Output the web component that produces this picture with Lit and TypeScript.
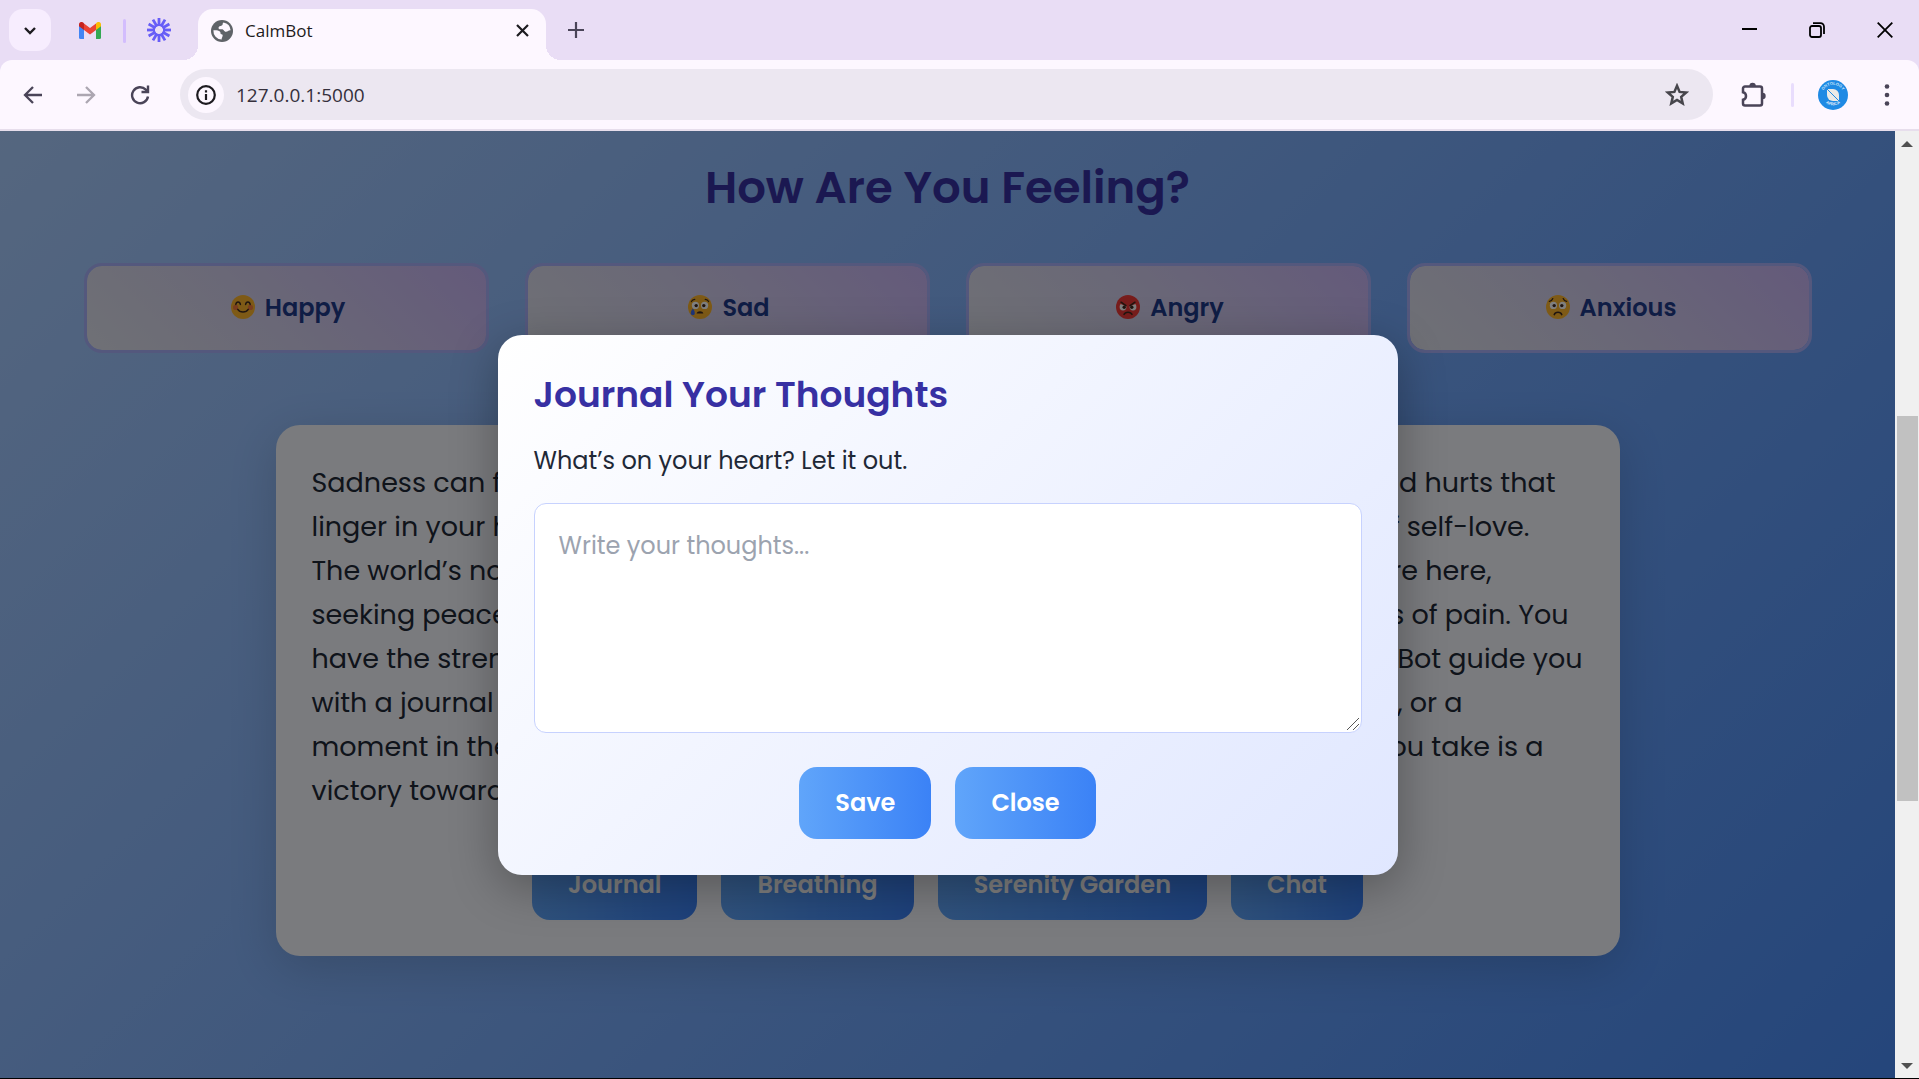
import { LitElement, html, svg, css } from "lit";
import { customElement } from "lit/decorators.js";

type Mood = { name: string; face: unknown };

const yellow = svg`<circle cx="12" cy="12" r="12" fill="#fcb52c"/>`;
const eyes = svg`
  <circle cx="7.4" cy="10.4" r="3.6" fill="#fff"/><circle cx="16.6" cy="10.4" r="3.6" fill="#fff"/>
  <circle cx="8.2" cy="10.6" r="1.7" fill="#402a20"/><circle cx="15.8" cy="10.6" r="1.7" fill="#402a20"/>`;

const moods: Mood[] = [
  {
    name: "Happy",
    face: svg`${yellow}
      <circle cx="4.6" cy="12.4" r="2.6" fill="#f47b3c"/><circle cx="19.4" cy="12.4" r="2.6" fill="#f47b3c"/>
      <path d="M4.8 9.4c.6-3.2 4-3.2 4.6 0M14.6 9.4c.6-3.2 4-3.2 4.6 0M6.8 14.4c2 3.4 8.4 3.4 10.4 0" fill="none" stroke="#402a20" stroke-width="1.5" stroke-linecap="round"/>`,
  },
  {
    name: "Sad",
    face: svg`${yellow}${eyes}
      <path d="M3.4 6.6c.6-1.2 1.8-2 3.4-2.2M20.600 6.600c-.6-1.200-1.800-2-3.400-2.200" fill="none" stroke="#402a20" stroke-width="1.2" stroke-linecap="round"/>
      <path d="M8.6 18.4c.8-2.8 6-2.8 6.8 0z" fill="#402a20"/>
      <path d="M4.8 13.6c1.6 1.6 2 3.2 2 4.6a2 2 0 0 1-4 0c0-1.4.6-3 2-4.6z" fill="#3d6cf0"/>`,
  },
  {
    name: "Angry",
    face: svg`<circle cx="12" cy="12" r="12" fill="#f03a38"/>
      <circle cx="7" cy="12" r="3.4" fill="#fff"/><circle cx="17" cy="12" r="3.4" fill="#fff"/>
      <path d="M3 8.2 10.4 11.4 9.6 6zM21 8.2 13.6 11.4 14.4 6z" fill="#f03a38"/>
      <circle cx="8.2" cy="12.2" r="1.7" fill="#402a20"/><circle cx="15.8" cy="12.2" r="1.7" fill="#402a20"/>
      <path d="M5 7.2 10 10.6M19 7.2 14 10.6M8 19.4c1.4-3 6.6-3 8 0" fill="none" stroke="#402a20" stroke-width="1.5" stroke-linecap="round"/>`,
  },
  {
    name: "Anxious",
    face: svg`${yellow}${eyes}
      <path d="M3.4 6.4c1.6-.2 2.8-1.2 3.4-2.8M20.6 6.4c-1.6-.2-2.8-1.2-3.4-2.8" fill="none" stroke="#402a20" stroke-width="1.3" stroke-linecap="round"/>
      <path d="M8.2 19.6c1.2-3 6.4-3 7.6 0" fill="none" stroke="#402a20" stroke-width="1.5" stroke-linecap="round"/>`,
  },
];

/* Each line: opening words, closing words, free space left at the line's end. */
const lines: [string, string, number][] = [
  ["Sadness can f", "d hurts that", 28],
  ["linger in your h", "f self-love.", 54],
  ["The world’s no", "re here,", 92],
  ["seeking peace", "s of pain. You", 15],
  ["have the stren", "Bot guide you", 1],
  ["with a journal", ", or a", 121],
  ["moment in the", "ou take is a", 40],
  ["victory toward", "", 0],
];

const tools = ["Journal", "Breathing", "Serenity Garden", "Chat"];

@customElement("browser-chrome")
export class BrowserChrome extends LitElement {
  static styles = css`
    :host {
      display: block;
      font-family: "Segoe UI", "Open Sans", "Noto Sans", sans-serif;
      color: #1d1b20;
      background: #e9ddf5;
    }
    button {
      display: grid;
      place-items: center;
      border: 0;
      padding: 0;
      background: none;
      width: 42px;
      height: 42px;
      flex: none;
      color: #4a4458;
    }
    svg { display: block; }
    .strip { display: flex; align-items: flex-end; height: 60px; padding-left: 9px; }
    .strip > button, .strip > .rule { margin-bottom: 9px; }
    .menu { background: #f7edfe; border-radius: 14px; color: #1d1b20; }
    .pinned { width: 48px; }
    .pinned.first { margin-left: 15px; }
    .rule { width: 3px; height: 24px; background: #d3bdfd; border-radius: 2px; flex: none; }
    .strip > .rule { margin: 0 9px 17px; }
    .tab {
      display: flex;
      align-items: center;
      box-sizing: border-box;
      width: 348px;
      height: 51px;
      margin: 0 9px 0 15px;
      padding: 0 9px 8px 13px;
      gap: 12px;
      background: #fdf7ff;
      border-radius: 15px 15px 0 0;
      position: relative;
      font-size: 17px;
    }
    .tab::before, .tab::after {
      content: "";
      position: absolute;
      bottom: 0;
      width: 15px;
      height: 15px;
    }
    .tab::before { right: 100%; background: radial-gradient(circle at 0 0, transparent 15px, #fdf7ff 15px); }
    .tab::after { left: 100%; background: radial-gradient(circle at 100% 0, transparent 15px, #fdf7ff 15px); }
    .tab-title { flex: 1; }
    .tab button { width: 30px; color: #1d1b20; }
    .window { display: flex; margin-left: auto; align-self: stretch; }
    .window button { width: 68px; height: 59px; color: #000; }
    .bar {
      display: flex;
      align-items: center;
      height: 69px;
      padding: 0 11px;
      background: #fdf7ff;
      border-radius: 12px 12px 0 0;
      border-bottom: 2px solid #e7deec;
    }
    .nav { display: flex; gap: 12px; margin-right: 19px; }
    .faded { color: #aca6b1; }
    .address {
      display: flex;
      align-items: center;
      flex: 1;
      height: 51px;
      border-radius: 26px;
      background: #ece7f1;
      padding: 0 3px 0 8px;
    }
    .address .site { width: 36px; height: 36px; border-radius: 50%; background: #fdf7ff; color: #1d1b20; margin-right: 12px; }
    .address input {
      flex: 1;
      border: 0;
      outline: 0;
      padding: 0;
      background: none;
      font: inherit;
      font-size: 19px;
      color: #35303c;
      min-width: 0;
    }
    .address .star { width: 42px; margin-right: 12px; }
    .bar > button { margin-left: 18px; }
    .bar > .extensions { margin-left: 20px; }
    .bar > .rule { margin-left: 16px; background: #e9ddfd; }
    .bar > .more { margin-left: 12px; }
    .badge { font: bold 4px "Liberation Sans", sans-serif; }
  `;

  render() {
    return html`
      <div class="strip">
        <button class="menu" aria-label="Search tabs">
          <svg width="14" height="9" viewBox="0 0 14 9"><path d="M2 2l5 5 5-5" fill="none" stroke="currentColor" stroke-width="2.4"/></svg>
        </button>
        <button class="pinned first" aria-label="Gmail">
          <svg width="22" height="17" viewBox="0 0 22 17">
            <path d="M0 3v12.5A1.5 1.5 0 0 0 1.5 17H5V7z" fill="#4285f4"/>
            <path d="M22 3v12.5a1.5 1.5 0 0 1-1.5 1.5H17V7z" fill="#34a853"/>
            <path d="M17 1.5V8l5-3.7V2.5C22 .2 19.4-.8 17.8.6z" fill="#fbbc04"/>
            <path d="M5 8V1.5l6 4.5 6-4.5V8l-6 4.5z" fill="#ea4335"/>
            <path d="M0 2.5v1.8L5 8V1.5L4.2.6C2.6-.8 0 .2 0 2.5z" fill="#c5221f"/>
          </svg>
        </button>
        <span class="rule"></span>
        <button class="pinned" aria-label="Recorder">
          <svg width="24" height="24" viewBox="0 0 24 24">
            <g stroke="#675df7" stroke-width="2.8">
              ${[0, 30, 60, 90, 120, 150, 180, 210, 240, 270, 300, 330].map(
                (a) => svg`<path d="M12 0v8" transform="rotate(${a} 12 12)"/>`
              )}
            </g>
            <circle cx="12" cy="12" r="5.2" fill="none" stroke="#675df7" stroke-width="2.2"/>
          </svg>
        </button>
        <div class="tab">
          <svg width="22" height="22" viewBox="0 0 22 22">
            <circle cx="11" cy="11" r="11" fill="#5f6368"/>
            <path d="M12.5 2.4c-1.5 1-.2 2.3-1.7 3.1-1.6.8-3.3.7-3.3 2.3s1.4 1.5 3.2 1.4c2.3-.1 2.2 2.5 4.2 2.500 2.200 0 2.300-1.700 4.700-1.500A8.700 8.700 0 0 0 12.500 2.400z" fill="#fdf7ff"/>
            <path d="M2.4 10.3c1.8-.2 5.2-.2 6.5 1.2 1 1.1.2 2.6 1.5 2.8 1.6.2 1.4 1.3 1 2.4-.4 1-.8 1.7-.7 2.900A8.700 8.700 0 0 1 2.400 10.300z" fill="#fdf7ff"/>
          </svg>
          <span class="tab-title">CalmBot</span>
          <button aria-label="Close tab">
            <svg width="13" height="13" viewBox="0 0 13 13"><path d="M1 1l11 11M12 1L1 12" stroke="currentColor" stroke-width="2.2"/></svg>
          </button>
        </div>
        <button aria-label="New tab">
          <svg width="16" height="16" viewBox="0 0 16 16"><path d="M8 0v16M0 8h16" stroke="currentColor" stroke-width="2.2"/></svg>
        </button>
        <div class="window">
          <button aria-label="Minimize"><svg width="15" height="15"><path d="M0 7h15" stroke="currentColor" stroke-width="2"/></svg></button>
          <button aria-label="Restore">
            <svg width="16" height="16" viewBox="0 0 16 16" fill="none" stroke="currentColor" stroke-width="1.8">
              <rect x="1" y="4" width="11" height="11" rx="2"/><path d="M4 1.2h7.5a3.5 3.5 0 0 1 3.5 3.5V12"/>
            </svg>
          </button>
          <button aria-label="Close window"><svg width="16" height="16"><path d="M.7.7l14.6 14.6M15.3.7L.7 15.3" stroke="currentColor" stroke-width="1.8"/></svg></button>
        </div>
      </div>
      <div class="bar">
        <div class="nav">
          <button aria-label="Back"><svg width="19" height="18" viewBox="0 0 19 18" fill="none" stroke="currentColor" stroke-width="2.3"><path d="M19 9H2M10 1L2 9l8 8"/></svg></button>
          <button class="faded" aria-label="Forward"><svg width="19" height="18" viewBox="0 0 19 18" fill="none" stroke="currentColor" stroke-width="2.3"><path d="M0 9h17M9 1l8 8-8 8"/></svg></button>
          <button aria-label="Reload"><svg width="20" height="20" viewBox="0 0 20 20" fill="none" stroke="currentColor" stroke-width="2.4"><path d="M18 11.5A8 8 0 1 1 15.8 4.6L17 6"/><path d="M18 .5V7h-6.5"/></svg></button>
        </div>
        <div class="address">
          <button class="site" aria-label="View site information">
            <svg width="20" height="20" viewBox="0 0 20 20"><circle cx="10" cy="10" r="8.8" fill="none" stroke="currentColor" stroke-width="2.2"/><path d="M10 9v6M10 5.2v2.2" stroke="currentColor" stroke-width="2.2"/></svg>
          </button>
          <input aria-label="Address" .value=${"127.0.0.1:5000"} />
          <button class="star" aria-label="Bookmark this tab">
            <svg width="24" height="23" viewBox="0 0 24 23"><path d="M12 2.800l2.600 6.100 6.600.6-5 4.400 1.500 6.500-5.700-3.500-5.700 3.500 1.500-6.500-5-4.400 6.600-.6z" fill="none" stroke="#47464c" stroke-width="2.500"/></svg>
          </button>
        </div>
        <button class="extensions" aria-label="Extensions">
          <svg width="26" height="26" viewBox="0 0 26 26">
            <path d="M4 4.500h15a2 2 0 0 1 2 2v15a2 2 0 0 1-2 2H4a2 2 0 0 1-2-2v-3.700c4-.8 4-6.800 0-7.600V6.500a2 2 0 0 1 2-2z" fill="none" stroke="currentColor" stroke-width="2.500"/>
            <path d="M8.400 4a3.200 3.200 0 0 1 6.400 0zM21.500 10.800a3.200 3.200 0 0 1 0 6.400z" fill="currentColor"/>
          </svg>
        </button>
        <span class="rule"></span>
        <button aria-label="Profile">
          <svg width="30" height="30" viewBox="0 0 30 30">
            <circle cx="15" cy="15" r="15" fill="#1f8ae4"/>
            <path id="over" d="M4.500 12.500a11 11 0 0 1 21 0" fill="none"/>
            <path id="under" d="M5 19.500a11.500 11.500 0 0 0 20 0" fill="none"/>
            <text class="badge" fill="#cfe6fa" text-anchor="middle"><textPath href="#over" startOffset="50%">ONTOLOGY</textPath></text>
            <text class="badge" fill="#e6f2fc" text-anchor="middle"><textPath href="#under" startOffset="50%">AFRICA</textPath></text>
            <path d="M9 9h6a6 6 0 0 1 6 6v6h-6a6 6 0 0 1-6-6z" fill="#eceae6"/>
            <path d="M9 9l12 12" stroke="#1f8ae4" stroke-width="1"/>
          </svg>
        </button>
        <button class="more" aria-label="Menu">
          <svg width="6" height="22" viewBox="0 0 6 22" fill="currentColor"><circle cx="3" cy="2.500" r="2.300"/><circle cx="3" cy="11" r="2.300"/><circle cx="3" cy="19.500" r="2.300"/></svg>
        </button>
      </div>
    `;
  }
}

@customElement("journal-dialog")
export class JournalDialog extends LitElement {
  static styles = css`
    :host {
      display: block;
      box-sizing: border-box;
      width: min(900px, 92%);
      padding: 36px;
      border-radius: 24px;
      background: linear-gradient(135deg, #ffffff, #e0e7ff);
      box-shadow: 0 12px 48px rgba(0, 0, 0, 0.3);
      font-family: Poppins, Inter, sans-serif;
    }
    h2 { margin: 0 0 21px; font-size: 36px; line-height: 48px; font-weight: 600; color: #3730a3; }
    label { display: block; margin-bottom: 21px; font-size: 24px; line-height: 42px; color: #1f2937; }
    textarea {
      display: block;
      box-sizing: border-box;
      width: 100%;
      height: 230px;
      padding: 24px;
      border: 1px solid #c7d2fe;
      border-radius: 12px;
      background: #fff;
      font: inherit;
      font-size: 24px;
      line-height: 36px;
      resize: both;
      margin-bottom: 34px;
    }
    textarea::placeholder { color: #9ca3af; opacity: 1; }
    textarea::-webkit-resizer {
      background: linear-gradient(135deg, transparent 46%, #555 46% 54%, transparent 54% 71%, #555 71% 79%, transparent 79%)
        1px 1px / 12px 12px no-repeat;
    }
    .actions { display: flex; justify-content: center; gap: 24px; }
    .actions button {
      height: 72px;
      padding: 0 36px;
      border: 0;
      border-radius: 18px;
      background: linear-gradient(90deg, #60a5fa, #3b82f6);
      color: #fff;
      font: inherit;
      font-size: 24px;
      font-weight: 600;
    }
  `;

  render() {
    return html`
      <h2>Journal Your Thoughts</h2>
      <label for="entry">What’s on your heart? Let it out.</label>
      <textarea id="entry" placeholder="Write your thoughts..."></textarea>
      <div class="actions">
        <button>Save</button>
        <button>Close</button>
      </div>
    `;
  }
}

@customElement("app-root")
export class AppRoot extends LitElement {
  static styles = css`
    :host {
      display: flex;
      flex-direction: column;
      box-sizing: border-box;
      height: 100vh;
      border-bottom: 1px solid #000;
      overflow: hidden;
    }
    .view { display: flex; flex: 1; min-height: 0; }
    .page {
      flex: 1;
      position: relative;
      overflow: hidden;
      background: linear-gradient(135deg, #aacdff, #4a8cf6);
      font-family: Poppins, Inter, sans-serif;
    }
    .feelings { box-sizing: border-box; max-width: 1800px; margin: 0 auto; padding: 24px 36px 0; }
    h1 { margin: 0 0 42px; font-size: 45px; line-height: 66px; font-weight: 600; text-align: center; color: #3730a3; }
    .moods { display: grid; grid-template-columns: repeat(4, 1fr); gap: 36px; }
    .mood {
      display: flex;
      align-items: center;
      justify-content: center;
      gap: 10px;
      height: 90px;
      padding: 0 0 2px 4px;
      border: 3px solid #a8b0fb;
      border-radius: 18px;
      background: linear-gradient(45deg, #dfe2ec, #d4d0ee 45%, #c8b4f6) padding-box;
      color: #1e3a8a;
      font: inherit;
      font-size: 24px;
      font-weight: 600;
    }
    .panel {
      box-sizing: border-box;
      max-width: 1344px;
      margin: 72px auto 0;
      padding: 36px;
      border-radius: 24px;
      background: #f4f7fd;
      box-shadow: 0 12px 48px rgba(0, 0, 0, 0.15);
    }
    .message { margin: 0 0 35px; font-size: 27px; line-height: 44px; color: #1f2937; }
    .line { display: flex; justify-content: space-between; white-space: pre; }
    .tools { display: flex; justify-content: center; gap: 24px; }
    .tools button {
      height: 72px;
      padding: 0 36px;
      border: 0;
      border-radius: 18px;
      background: linear-gradient(90deg, #60a5fa, #3b82f6);
      color: #fff;
      font: inherit;
      font-size: 24px;
      font-weight: 600;
    }
    .overlay {
      position: absolute;
      inset: 0;
      display: grid;
      place-items: center;
      background: rgba(0, 0, 0, 0.5);
    }
    .scroll {
      display: grid;
      grid-template-rows: 26px 259px 385px 1fr 24px;
      width: 24px;
      background: #f0f0f0;
      justify-items: center;
      align-items: center;
    }
    .thumb { width: 21px; height: 100%; background: #c1c1c1; grid-row: 3; }
    .down { grid-row: 5; }
  `;

  render() {
    return html`
      <browser-chrome></browser-chrome>
      <div class="view">
        <main class="page">
          <section class="feelings">
            <h1>How Are You Feeling?</h1>
            <div class="moods">
              ${moods.map(
                (m) => html`<button class="mood">
                  <svg width="24" height="24" viewBox="0 0 24 24" aria-hidden="true">${m.face}</svg>${m.name}
                </button>`
              )}
            </div>
          </section>
          <section class="panel">
            <p class="message">
              ${lines.map(
                ([start, end, rest]) => html`<span class="line" style="padding-right:${rest}px"><span>${start}</span><span>${end}</span></span>`
              )}
            </p>
            <div class="tools">${tools.map((t) => html`<button>${t}</button>`)}</div>
          </section>
          <div class="overlay"><journal-dialog role="dialog" aria-label="Journal"></journal-dialog></div>
        </main>
        <div class="scroll" aria-hidden="true">
          <svg width="12" height="6"><path d="M0 6l6-6 6 6z" fill="#505050"/></svg>
          <span class="thumb"></span>
          <svg class="down" width="12" height="6"><path d="M0 0l6 6 6-6z" fill="#505050"/></svg>
        </div>
      </div>
    `;
  }
}
